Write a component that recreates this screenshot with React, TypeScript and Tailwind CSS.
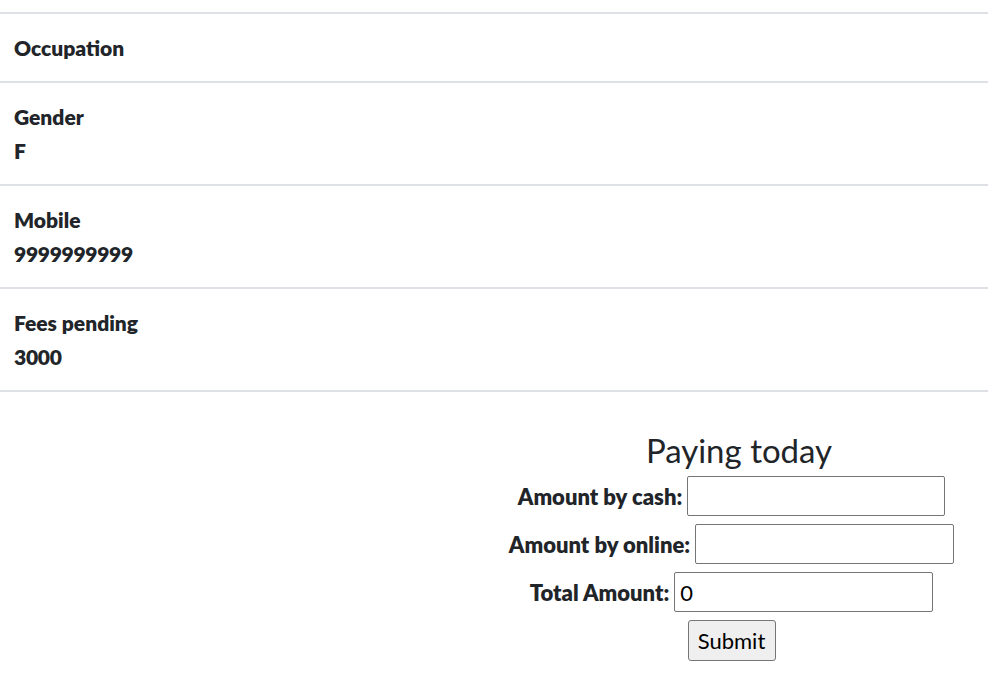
import React from "react";

const rows: { label: string; value?: string; h: string }[] = [
  { label: "Occupation", h: "h-[69px]" },
  { label: "Gender", value: "F", h: "h-[103px]" },
  { label: "Mobile", value: "9999999999", h: "h-[103px]" },
  { label: "Fees pending", value: "3000", h: "h-[103px]" },
];

export default function App() {
  return (
    <div
      className="w-[988px] h-[688px] overflow-hidden bg-white text-[#212529]"
      style={{ fontFamily: "Lato, 'Liberation Sans', sans-serif" }}
    >
      <div className="h-3" />
      {rows.map((r) => (
        <div
          key={r.label}
          className={`${r.h} border-t-2 border-[#dee2e6] px-[14px] pt-[17px] text-[21px] font-extrabold leading-[33.5px]`}
        >
          <div>{r.label}</div>
          {r.value && <div className="tracking-[-0.3px]">{r.value}</div>}
        </div>
      ))}
      <div className="border-t-2 border-[#dee2e6] flex">
        <div className="w-[494px] shrink-0" />
        <div className="w-[490px] flex flex-col items-center pt-[36px]">
          <h3 className="text-[33px] font-normal leading-[44px] mb-[4px]">Paying today</h3>
          <div className="flex flex-col items-center gap-2 pr-[15px]">
            <div className="flex items-center gap-[5px] h-[40px]">
              <label className="text-[22px] font-extrabold">Amount by cash:</label>
              <input className="w-[258px] h-[40px] border border-[#767676] rounded-[2px] px-[5px] text-[22px] bg-white" />
            </div>
            <div className="flex items-center gap-[5px] h-[40px]">
              <label className="text-[22px] font-extrabold">Amount by online:</label>
              <input className="w-[259px] h-[40px] border border-[#767676] rounded-[2px] px-[5px] text-[22px] bg-white" />
            </div>
            <div className="flex items-center gap-[5px] h-[40px]">
              <label className="text-[22px] font-extrabold">Total Amount:</label>
              <input
                defaultValue="0"
                className="w-[259px] h-[40px] border border-[#767676] rounded-[2px] px-[5px] text-[22px] bg-white text-black"
              />
            </div>
            <button className="w-[88px] h-[41px] bg-[#efefef] border border-[#767676] rounded-[3px] text-[22px] text-black">
              Submit
            </button>
          </div>
        </div>
      </div>
    </div>
  );
}
